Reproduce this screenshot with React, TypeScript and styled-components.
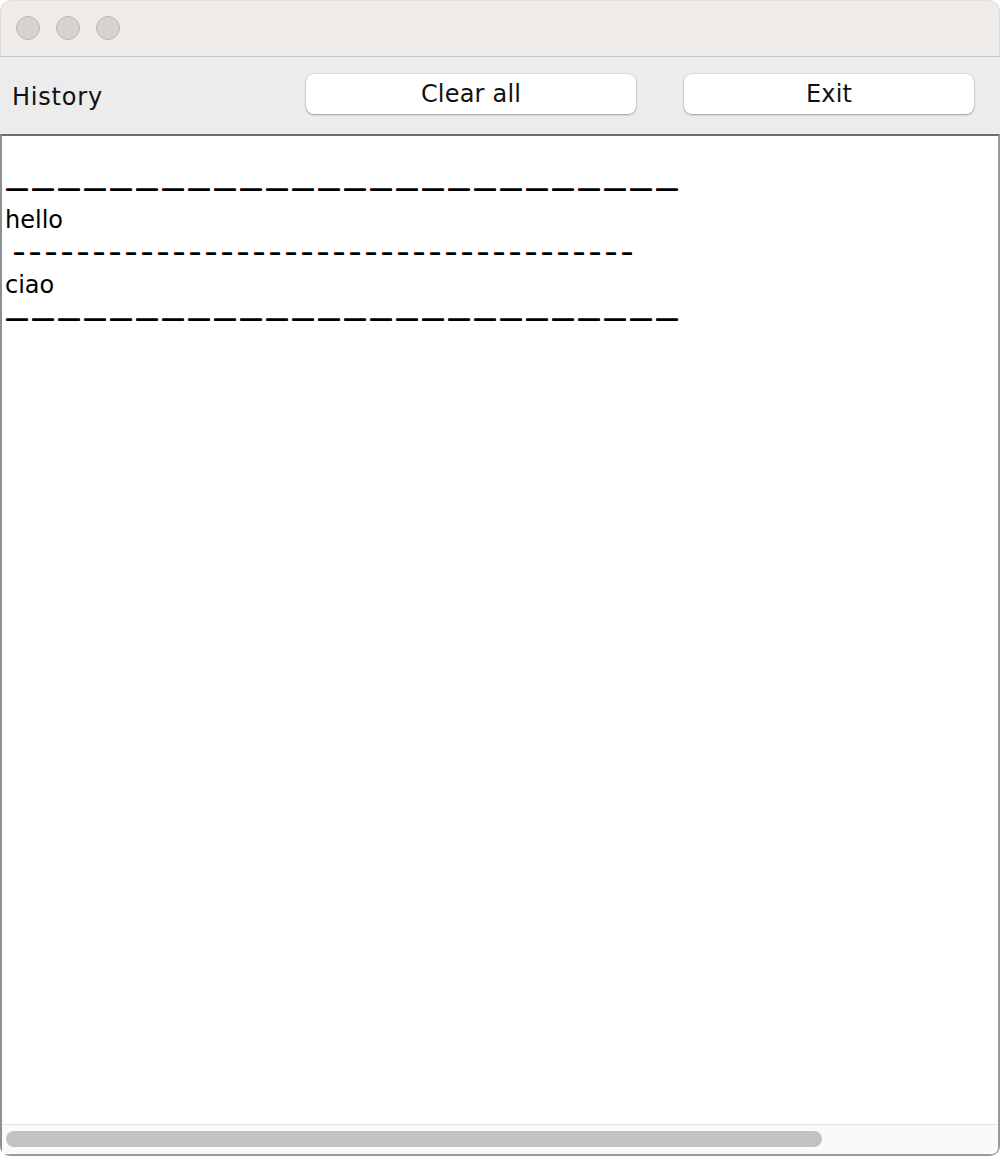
import React from "react";
import styled, { createGlobalStyle } from "styled-components";

const Global = createGlobalStyle`
  html, body { margin: 0; padding: 0; background: #ffffff; }
  body { font-family: "DejaVu Sans", "Liberation Sans", sans-serif; }
`;

const Window = styled.div`
  width: 1000px;
  height: 1156px;
  display: flex;
  flex-direction: column;
  box-sizing: border-box;
  background: #ececec;
  border-radius: 12px 12px 10px 10px;
  overflow: hidden;
`;

const TitleBar = styled.div`
  height: 57px;
  flex: none;
  background: #efebe8;
  border-bottom: 1px solid #c9c7c5;
  border-left: 1px solid #dcd9d6;
  border-right: 1px solid #dcd9d6;
  border-top: 1px solid #e2dfdc;
  border-radius: 12px 12px 0 0;
  box-sizing: border-box;
  display: flex;
  align-items: center;
  gap: 16px;
  padding-left: 15px;
  padding-bottom: 1px;
`;

const Light = styled.span`
  width: 24px;
  height: 24px;
  box-sizing: border-box;
  border-radius: 50%;
  background: #d6d3cf;
  border: 1px solid #bbb8b4;
`;

const Toolbar = styled.div`
  height: 77px;
  flex: none;
  display: grid;
  grid-template-columns: 246px 330px 290px;
  column-gap: 48px;
  align-items: center;
  padding-left: 12px;
  box-sizing: border-box;
  background: #ececec;
`;

const Label = styled.span`
  font-size: 24px;
  letter-spacing: 0.8px;
  color: #111;
  padding-top: 2px;
`;

const Button = styled.button`
  height: 40px;
  margin-top: -3px;
  background: #ffffff;
  border: none;
  border-radius: 8px;
  box-shadow: 0 0 0 0.5px rgba(0, 0, 0, 0.12), 0 1px 2px rgba(0, 0, 0, 0.3);
  font-family: "DejaVu Sans", "Liberation Sans", sans-serif;
  font-size: 24px;
  letter-spacing: 0.2px;
  color: #111;
  padding: 0;
`;

const TextArea = styled.div`
  flex: 1;
  display: flex;
  flex-direction: column;
  background: #ffffff;
  border-top: 2px solid #6e6e6e;
  border-left: 2px solid #8f8f8f;
  border-right: 2px solid #9a9a9a;
  border-bottom: 2px solid #9a9a9a;
  border-bottom-right-radius: 8px;
  border-bottom-left-radius: 4px;
  min-height: 0;
`;

const Content = styled.div`
  flex: 1;
  padding: 2.5px 0 0 3px;
  font-family: "DejaVu Sans", "Liberation Sans", sans-serif;
  font-size: 24px;
  color: #000;
  overflow: hidden;
`;

const Line = styled.div<{ $indent?: number }>`
  height: 32.5px;
  line-height: 32.5px;
  white-space: pre;
  padding-left: ${(p) => p.$indent ?? 0}px;
`;

const Rule = styled.span<{ $spacing: number; $lift: number }>`
  letter-spacing: ${(p) => p.$spacing}px;
  text-shadow: 0 0.8px 0 #000;
  position: relative;
  top: ${(p) => -p.$lift}px;
`;

const HScroll = styled.div`
  height: 28px;
  flex: none;
  background: #fafafa;
  border-top: 1px solid #e3e3e3;
  display: flex;
  align-items: center;
  padding: 0 0 1px 4px;
  border-bottom-right-radius: 8px;
`;

const Thumb = styled.div`
  width: 816px;
  height: 16px;
  border-radius: 8px;
  background: #c2c2c2;
`;

const em = "—".repeat(26);
const en = "–".repeat(39);

export default function App() {
  return (
    <>
      <Global />
      <Window>
        <TitleBar>
          <Light />
          <Light />
          <Light />
        </TitleBar>
        <Toolbar>
          <Label>History</Label>
          <Button>Clear all</Button>
          <Button>Exit</Button>
        </Toolbar>
        <TextArea>
          <Content>
            <Line />
            <Line>
              <Rule $spacing={2} $lift={-1}>{em}</Rule>
            </Line>
            <Line>hello</Line>
            <Line $indent={8}>
              <Rule $spacing={4} $lift={0}>{en}</Rule>
            </Line>
            <Line>ciao</Line>
            <Line>
              <Rule $spacing={2} $lift={-1}>{em}</Rule>
            </Line>
          </Content>
          <HScroll>
            <Thumb />
          </HScroll>
        </TextArea>
      </Window>
    </>
  );
}
